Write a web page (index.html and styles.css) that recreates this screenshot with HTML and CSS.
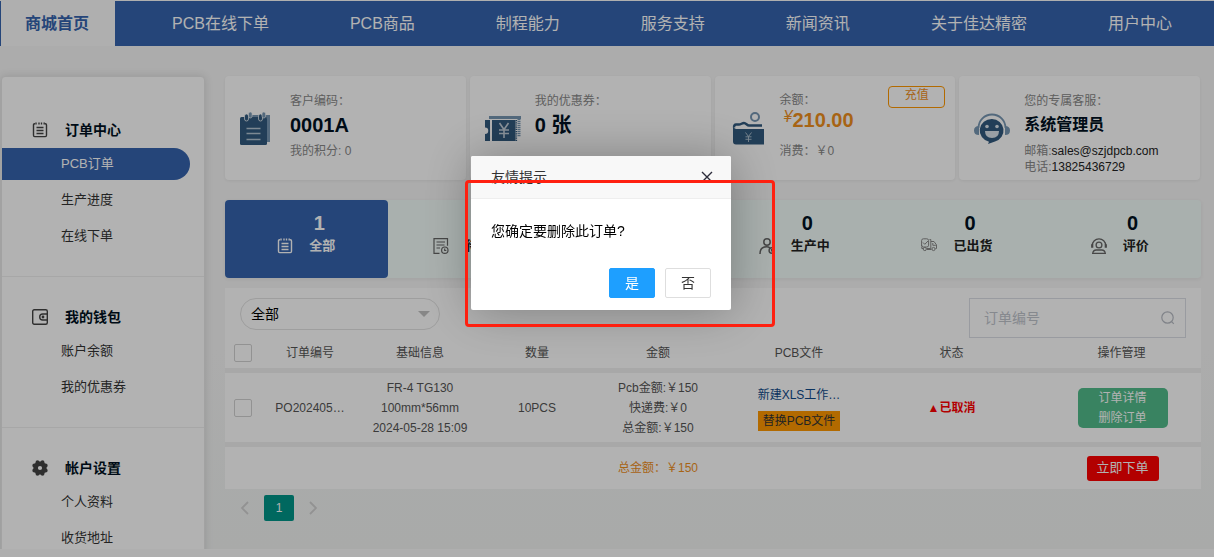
FILE: index.html
```html
<!DOCTYPE html>
<html lang="zh-CN">
<head>
<meta charset="utf-8">
<title>订单中心</title>
<link rel="stylesheet" href="styles.css">
</head>
<body>
<svg class="defs" aria-hidden="true">
  <symbol id="i-list" viewBox="0 0 16 16" fill="none" stroke="currentColor">
    <path d="M3 1.700h-.3q-1.200 0-1.200 1.200v10.400q0 1.300 1.200 1.300h10.600q1.200 0 1.200-1.300V2.900q0-1.200-1.200-1.200H13M4 .5v2M7 .5v2M9.500 .5v2M12.200 .5v2" stroke-width="1.400"/>
    <path d="M4.500 5.500h7M4.500 8.500h7M4.500 11.500h7" stroke-width="1.300"/>
  </symbol>
</svg>

<header>
  <nav class="topnav" aria-label="主导航">
    <a class="topnav-link is-active" href="#">商城首页</a>
    <a class="topnav-link" href="#">PCB在线下单</a>
    <a class="topnav-link" href="#">PCB商品</a>
    <a class="topnav-link" href="#">制程能力</a>
    <a class="topnav-link" href="#">服务支持</a>
    <a class="topnav-link" href="#">新闻资讯</a>
    <a class="topnav-link" href="#">关于佳达精密</a>
    <a class="topnav-link" href="#">用户中心</a>
  </nav>
</header>

<div class="page">
  <aside class="sidebar">
    <section class="menu menu-first">
      <h2 class="menu-title"><svg class="icon"><use href="#i-list"/></svg>订单中心</h2>
      <a class="menu-link is-active" href="#">PCB订单</a>
      <a class="menu-link" href="#">生产进度</a>
      <a class="menu-link" href="#">在线下单</a>
    </section>
    <section class="menu">
      <h2 class="menu-title">
        <svg class="icon" viewBox="0 0 16 16" fill="none" stroke="currentColor" stroke-width="1.400"><rect x=".7" y=".7" width="14.600" height="14.600" rx="1.500"/><path d="M15.300 5h-4.600a3 3 0 0 0 0 6h4.600"/><circle cx="11" cy="8" r=".7"/></svg>我的钱包</h2>
      <a class="menu-link" href="#">账户余额</a>
      <a class="menu-link" href="#">我的优惠券</a>
    </section>
    <section class="menu">
      <h2 class="menu-title">
        <svg class="icon" viewBox="0 0 16 16"><path fill="currentColor" fill-rule="evenodd" d="M4 .8 6 .3 8 1.700 10 .3 12 .8 12.700 3.200 15.200 4 15.700 6 14.300 8 15.700 10 15.200 12 12.700 12.800 12 15.200 10 15.700 8 14.300 6 15.700 4 15.200 3.300 12.800.8 12 .3 10 1.700 8 .3 6 .8 4 3.300 3.200ZM8 5.900a2.100 2.100 0 1 0 0 4.200 2.100 2.100 0 0 0 0-4.200Z"/></svg>帐户设置</h2>
      <a class="menu-link" href="#">个人资料</a>
      <a class="menu-link" href="#">收货地址</a>
    </section>
  </aside>

  <main class="content">
    <section class="cards">
      <article class="card">
        <svg class="card-icon" viewBox="0 0 36 36">
          <path fill="#7797b3" d="M6 4h24v27h-3V7H6z"/>
          <rect x="0" y="6" width="27" height="28" rx="1.500" fill="#315a7e"/>
          <g fill="#315a7e" stroke="#fff" stroke-width=".7"><rect x="4.500" y="3" width="4" height="7" rx="2"/><rect x="18.500" y="3" width="4" height="7" rx="2"/></g>
          <g fill="#7797b3" stroke="#fff" stroke-width=".6"><rect x="8.500" y="1" width="3.600" height="6" rx="1.800"/><rect x="22" y="1" width="3.600" height="6" rx="1.800"/></g>
          <path d="M6.500 17.500h14M6.500 22.500h14M6.500 28.500h14" stroke="#b4c5d3" stroke-width="1.400"/>
        </svg>
        <div class="card-info">
          <p class="card-label">客户编码<span class="colon">：</span></p>
          <p class="card-value">0001A</p>
          <p class="card-note">我的积分: 0</p>
        </div>
      </article>
      <article class="card">
        <svg class="card-icon" viewBox="0 0 36 36">
          <path fill="#7797b3" d="M4 5h32v3H4z"/><path d="M34 8v18" stroke="#7797b3" stroke-width="3" stroke-dasharray="1.300 .7"/>
          <path fill="#315a7e" d="M0 9h5v21H0v-7a3.200 3.200 0 0 0 0-6.500zM7 9h23.500v21H7z"/>
          <path d="M31.300 9v21" stroke="#315a7e" stroke-width="1.600" stroke-dasharray="1.200 1"/>
          <path d="m14.500 12 4.500 6.500 4.500-6.500M19 18.500V27M14 19h10M14 22.500h10" fill="none" stroke="#c6d2dd" stroke-width="1.600"/>
        </svg>
        <div class="card-info">
          <p class="card-label">我的优惠券<span class="colon">：</span></p>
          <p class="card-value">0 张</p>
        </div>
      </article>
      <article class="card">
        <svg class="card-icon" viewBox="0 0 36 36">
          <circle cx="25" cy="6" r="4" fill="none" stroke="#7797b3" stroke-width="2"/>
          <path d="M32 14.500H19c-2 0-3-2.500-5-2.500s-3 1.500-5 1.500H6q-2 0-2 3" fill="none" stroke="#315a7e" stroke-width="2.400"/>
          <path fill="#315a7e" d="M3 15q1 3 3 3h28v15.500H6q-3 0-3-3z"/>
          <path d="m15.500 21.500 3 4 3-4M18.500 25.500V31M15.500 25.800h6M15.500 28.300h6" fill="none" stroke="#b4c5d3" stroke-width=".9"/>
        </svg>
        <div class="card-info">
          <p class="card-label card-label-short">余额<span class="colon">：</span></p>
          <p class="card-value card-money"><i class="yen">¥</i>210.00</p>
          <p class="card-note">消费<span class="colon">：</span>￥0</p>
        </div>
        <button class="recharge" type="button">充值</button>
      </article>
      <article class="card">
        <svg class="card-icon" viewBox="0 0 36 36">
          <path d="M4.500 17a13.500 13.500 0 0 1 27 0" fill="none" stroke="#7797b3" stroke-width="1.800"/>
          <path fill="#7797b3" d="M5 15v9q-5 0-5-4.500T5 15zM31 15v9q5 0 5-4.500T31 15z"/>
          <path fill="#315a7e" d="M18 8a12 11.500 0 0 1 3 22.500L14 33l1-2.300A12 11.500 0 0 1 18 8z"/>
          <circle cx="13" cy="15.500" r="1.800" fill="#dbe4ec"/><circle cx="23" cy="15.500" r="1.800" fill="#dbe4ec"/>
          <path d="M11 20h14q0 7-7 7t-7-7z" fill="#dbe4ec"/>
        </svg>
        <div class="card-info">
          <p class="card-label">您的专属客服<span class="colon">：</span></p>
          <p class="card-value card-name">系统管理员</p>
          <p class="card-note">邮箱:<span class="dark">sales@szjdpcb.com</span></p>
          <p class="card-note">电话:<span class="dark">13825436729</span></p>
        </div>
      </article>
    </section>

    <nav class="stats" aria-label="订单状态">
      <a class="stat is-active" href="#"><b class="stat-num">1</b><span class="stat-label"><svg class="icon"><use href="#i-list"/></svg>全部</span></a>
      <a class="stat" href="#"><b class="stat-num">0</b><span class="stat-label">
        <svg class="icon" viewBox="0 0 16 16" fill="none" stroke="currentColor" stroke-width="1.200"><path d="M6.500 15.400H1V.7h13.500v7M3.500 4h8.500M3.500 7h8M3.500 10h3.500"/><circle cx="11.800" cy="12.200" r="3.200"/><path d="M11.700 10.500v2h1.600"/></svg>待审核</span></a>
      <a class="stat" href="#"><b class="stat-num">0</b><span class="stat-label"><svg class="icon"><use href="#i-list"/></svg>待付款</span></a>
      <a class="stat" href="#"><b class="stat-num">0</b><span class="stat-label">
        <svg class="icon" viewBox="0 0 16 16" fill="none" stroke="currentColor" stroke-width="1.500"><circle cx="8" cy="4" r="3.200"/><path d="M1 16q0-7.200 6.500-7.200 2 0 3.500 1"/><circle cx="12.800" cy="12.500" r="2.700"/><path d="M12.700 11v1.700h1.400"/></svg>生产中</span></a>
      <a class="stat" href="#"><b class="stat-num">0</b><span class="stat-label">
        <svg class="icon icon-thin" viewBox="0 0 16 16" fill="none" stroke="currentColor" stroke-width="1"><path d="M.6 8V2.600Q.6.800 2.400.8h3.400q1.800 0 1.800 1.800v4.600q0 1.800-1.800 1.800H2.400Q.6 9 .6 7.200zM2 4.500l1.800 1.800L7 3M8.500 1.500h1.300v9H5.800M2 10.500H.8V8.500M10 3.500h3l2.500 3.400v3.600h-1M11.800 5v2.300h3M6 11.500h4.500"/><circle cx="3.800" cy="11" r="1.600"/><circle cx="12.500" cy="11" r="1.600"/></svg>已出货</span></a>
      <a class="stat" href="#"><b class="stat-num">0</b><span class="stat-label">
        <svg class="icon" viewBox="0 0 16 16" fill="none" stroke="currentColor" stroke-width="1.300"><path d="M1.300 7.500a6.700 6.700 0 0 1 13.400 0"/><path d="M1.200 6.200v3.500M14.800 6.200v3.500" stroke-width="2.200"/><circle cx="8" cy="7" r="2.900"/><path d="M1.700 15.300q.5-3.300 3.500-3.300h5.600q3 0 3.500 3.300z"/></svg>评价</span></a>
    </nav>

    <section class="orders">
      <div class="filters">
        <div class="status-select">
          <select aria-label="订单状态"><option>全部</option></select>
        </div>
        <label class="search">
          <input type="text" placeholder="订单编号" aria-label="订单编号">
          <svg class="search-icon" viewBox="0 0 14 14" fill="none" stroke="currentColor" stroke-width="1.200"><circle cx="6.500" cy="6.500" r="5.700"/><path d="m10.500 10.500 2.300 2.300"/></svg>
        </label>
      </div>
      <table class="table">
        <colgroup><col class="c-check"><col class="c-no"><col class="c-info"><col class="c-qty"><col class="c-sum"><col class="c-file"><col class="c-state"><col class="c-ops"></colgroup>
        <thead>
          <tr>
            <th class="check"><input type="checkbox" aria-label="全选"></th>
            <th>订单编号</th><th>基础信息</th><th>数量</th><th>金额</th><th>PCB文件</th><th>状态</th><th>操作管理</th>
          </tr>
        </thead>
        <tbody>
          <tr class="order">
            <td class="check"><input type="checkbox" aria-label="选择订单"></td>
            <td>PO202405…</td>
            <td>FR-4 TG130<br>100mm*56mm<br>2024-05-28 15:09</td>
            <td>10PCS</td>
            <td>Pcb金额:￥150<br>快递费:￥0<br>总金额:￥150</td>
            <td><div class="file"><a class="file-link" href="#">新建XLS工作…</a><button class="file-replace" type="button">替换PCB文件</button></div></td>
            <td class="cancelled">▲已取消</td>
            <td class="action"><div class="ops"><a href="#">订单详情</a><a href="#">删除订单</a></div></td>
          </tr>
        </tbody>
        <tfoot>
          <tr>
            <td colspan="4"></td>
            <td class="total">总金额<span class="colon">：</span>￥150</td>
            <td colspan="2"></td>
            <td class="action"><button class="buy" type="button">立即下单</button></td>
          </tr>
        </tfoot>
      </table>
    </section>

    <nav class="pager" aria-label="分页">
      <button class="pager-item" type="button" aria-label="上一页"><svg class="chev" viewBox="0 0 14 14" fill="none" stroke="currentColor" stroke-width="1.800"><path d="M10 1 4 7l6 6"/></svg></button>
      <button class="pager-item is-active" type="button">1</button>
      <button class="pager-item" type="button" aria-label="下一页"><svg class="chev" viewBox="0 0 14 14" fill="none" stroke="currentColor" stroke-width="1.800"><path d="m4 1 6 6-6 6"/></svg></button>
    </nav>
  </main>
</div>

<div class="shade"></div>
<div class="dialog" role="dialog" aria-labelledby="dialog-title">
  <div class="dialog-head">
    <span id="dialog-title">友情提示</span>
    <button class="dialog-close" type="button" aria-label="关闭"><svg class="close-icon" viewBox="0 0 12 12" fill="none" stroke="currentColor" stroke-width="1.400"><path d="m1 1 10 10M11 1 1 11"/></svg></button>
  </div>
  <p class="dialog-text">您确定要删除此订单?</p>
  <div class="dialog-actions">
    <button class="btn btn-primary" type="button">是</button>
    <button class="btn" type="button">否</button>
  </div>
</div>
<div class="marker"></div>
</body>
</html>
```

FILE: styles.css
```css
* { box-sizing: border-box; }

body {
  margin: 0;
  padding: 1px 0 0 0;
  min-height: 100vh;
  overflow: hidden;
  background: #fbfbfb;
  color: #555;
  font: 12px/20px "Liberation Sans", "Noto Sans CJK SC", sans-serif;
}

h2, p { margin: 0; font-weight: 400; }
a { color: inherit; text-decoration: none; }
button, input, select { font: inherit; color: inherit; padding: 0; }
button { cursor: pointer; border: 0; background: none; }

.defs { display: none; }
.icon { flex: none; width: 16px; height: 16px; color: #444; }
.colon { font-family: "Noto Sans CJK TC", sans-serif; line-height: 1; }

/* top navigation */
.topnav {
  display: flex;
  gap: 32px;
  background: #3664ae;
  color: #fff;
  font-size: 16px;
  line-height: 45px;
  white-space: nowrap;
}
.topnav-link { padding: 0 24px 0 25px; }
.topnav-link.is-active {
  padding-right: 26px;
  border-left: 1px solid #3664ae;
  padding-left: 24px;
  background: #fbfbfb;
  color: #3664ae;
  font-weight: 700;
}

.page {
  display: flex;
  gap: 20px;
  height: calc(100vh - 54px);
  padding: 30px 13px 0 1px;
  overflow: hidden;
  background: linear-gradient(#f6f6f6 60%, #f2f4f3);
}

/* sidebar */
.sidebar {
  flex: none;
  align-self: flex-start;
  width: 204px;
  border: 1px solid #e8e8e8;
  border-radius: 4px;
  background: #fff;
  box-shadow: 0 0 8px rgba(0, 0, 0, .12);
}
.menu { padding: 22px 0 24px; border-bottom: 1px solid #f0f0f0; }
.menu-first { padding-top: 35px; }
.menu-title {
  display: flex;
  align-items: center;
  gap: 17px;
  height: 36px;
  padding-left: 30px;
  color: #012;
  font-size: 14px;
  font-weight: 700;
}
.menu-link {
  display: block;
  margin-bottom: 4px;
  padding-left: 59px;
  color: #333;
  font-size: 13px;
  line-height: 32px;
}
.menu-link:last-child { margin-bottom: 0; }
.menu-link.is-active {
  margin-right: 14px;
  border-radius: 0 16px 16px 0;
  background: #3664ae;
  color: #fff;
}

.content { flex: 1; min-width: 0; }

/* account cards */
.cards { display: grid; grid-template-columns: repeat(4, 1fr); gap: 4px; padding-right: 1px; }
.card {
  display: flex;
  height: 104px;
  padding: 10px 10px 0 15px;
  border-radius: 4px;
  background: #fff;
  box-shadow: 0 1px 3px rgba(0, 0, 0, .06);
}
.card-icon { flex: none; width: 36px; height: 36px; margin: 25px 14px 0 0; }
.card-info { padding-top: 5px; color: #888; line-height: 16px; white-space: nowrap; }
.card-label { line-height: 20px; }
.card-label-short { line-height: 18px; }
.card-value { margin-bottom: 4px; color: #012; font-size: 20px; font-weight: 700; line-height: 28px; }
.card-name { font-size: 16px; }
.card-money { margin-bottom: 12px; padding-left: 4px; color: #f0901e; line-height: 22px; }
.yen { font-size: 16px; font-weight: 400; line-height: 12px; vertical-align: 5px; }
.dark { color: #222; }
.recharge {
  display: flex;
  justify-content: center;
  width: 57px;
  height: 22px;
  margin-left: auto;
  border: 1px solid #f90;
  border-radius: 4px;
  color: #f0901e;
  line-height: 16px;
}

/* order state tabs */
.stats {
  display: grid;
  grid-template-columns: repeat(6, 1fr);
  margin-top: 20px;
  border-radius: 4px;
  background: #f3fdfa;
  box-shadow: 0 1px 4px rgba(0, 0, 0, .06);
}
.stat {
  display: grid;
  grid-template-rows: 24px 22px;
  height: 78px;
  padding-top: 11px;
  border-radius: 4px;
  color: #222;
}
.stat-num { padding-left: 26px; color: #012; font-size: 20px; line-height: 24px; text-align: center; }
.stat-label {
  display: flex;
  align-items: center;
  justify-content: center;
  gap: 16px;
  font-size: 13px;
  font-weight: 700;
}
.stat .icon { color: #666; }
.stat .icon-thin { color: #888; }
.stat.is-active { background: #3664ae; color: #fff; }
.stat.is-active .stat-num, .stat.is-active .icon { color: #fff; }

/* orders */
.orders { margin-top: 10px; }
.filters {
  display: flex;
  justify-content: space-between;
  align-items: flex-start;
  padding: 10px 15px 0;
  background: #fff;
}
.status-select { position: relative; width: 200px; }
.status-select select {
  width: 100%;
  height: 32px;
  padding: 0 10px;
  appearance: none;
  border: 1px solid #e2e2e2;
  border-radius: 16px;
  background: #fff;
  color: #000;
  font-size: 14px;
}
.status-select::after {
  content: "";
  position: absolute;
  right: 10px;
  top: 13px;
  border: 6px solid transparent;
  border-top-color: #c2c2c2;
  border-bottom: 0;
}
.search {
  display: flex;
  align-items: center;
  width: 217px;
  height: 40px;
  padding: 0 10px 0 14px;
  border: 1px solid #dcdfe6;
  color: #b8bcc4;
}
.search input { flex: 1; min-width: 0; border: 0; outline: 0; background: none; font-size: 14px; }
.search input::placeholder { color: #c0c4cc; }
.search-icon { flex: none; width: 14px; height: 14px; }

.table { width: 100%; table-layout: fixed; border-spacing: 0; text-align: center; white-space: nowrap; }
.c-check { width: 50px; }
.c-no { width: 70px; }
.c-info { width: 150px; }
.c-qty { width: 84px; }
.c-sum { width: 158px; }
.c-file { width: 124px; }
.c-state { width: 181px; }
.c-ops { width: 159px; }
.table th, .table td { padding: 0; background: #fff; font-weight: 400; }
.table th { height: 35px; border-bottom: 5px solid #f1f1f1; }
.order td { height: 74px; border-bottom: 5px solid #f1f1f1; }
.table tfoot td { height: 42px; }
.table .check { padding-left: 9px; text-align: left; }
.table .action { padding-left: 2px; }
.check input {
  display: block;
  width: 18px;
  height: 18px;
  margin: 0;
  appearance: none;
  border: 1px solid #d2d2d2;
  border-radius: 2px;
  background: #fff;
}
.file { display: inline-flex; flex-direction: column; gap: 6px; text-align: left; vertical-align: middle; }
.file-link { color: #0f4a8a; }
.file-replace { height: 20px; padding: 0 5px; background: #f90; color: #333; }
.table .cancelled { color: #f00; font-weight: 700; }
.ops {
  display: flex;
  flex-direction: column;
  width: 90px;
  margin: 0 auto;
  border-radius: 5px;
  background: #52bc8b;
  color: #fff;
}
.table .total { color: #f0901e; }
.buy {
  width: 72px;
  height: 25px;
  border-radius: 3px;
  background: #f00;
  color: #fff;
  font-size: 13px;
}

.pager { display: flex; gap: 4px; padding: 6px 5px 0; }
.pager-item {
  display: flex;
  align-items: center;
  justify-content: center;
  width: 30px;
  height: 26px;
  border-radius: 2px;
  color: #d2d2d2;
}
.pager-item.is-active { background: #009688; color: #fff; }
.chev { width: 14px; height: 14px; }

/* confirmation dialog */
.shade { position: fixed; inset: 0; background: rgba(0, 0, 0, .3); }
.dialog {
  position: fixed;
  left: 471px;
  top: 156px;
  width: 260px;
  border-radius: 2px;
  background: #fff;
  box-shadow: 1px 1px 50px rgba(0, 0, 0, .3);
  color: #000;
  font-size: 14px;
}
.dialog-head {
  display: flex;
  align-items: center;
  justify-content: space-between;
  height: 43px;
  padding: 0 18px 0 20px;
  border-bottom: 1px solid #eee;
  border-radius: 2px 2px 0 0;
  background: #f8f8f8;
  color: #333;
}
.dialog-close { display: flex; color: #2d2c3b; }
.close-icon { width: 12px; height: 12px; }
.dialog-text { padding: 20px 20px 25px; line-height: 24px; }
.dialog-actions { display: flex; justify-content: flex-end; gap: 10px; padding: 0 20px 12px; }
.btn {
  width: 46px;
  height: 30px;
  border: 1px solid #dedede;
  border-radius: 2px;
  background: #fff;
  color: #333;
}
.btn-primary { border-color: #1e9fff; background: #1e9fff; color: #fff; }

.marker {
  position: fixed;
  left: 465px;
  top: 180px;
  width: 310px;
  height: 147px;
  border: 3px solid #ff2010;
  border-radius: 4px;
  pointer-events: none;
}
```
